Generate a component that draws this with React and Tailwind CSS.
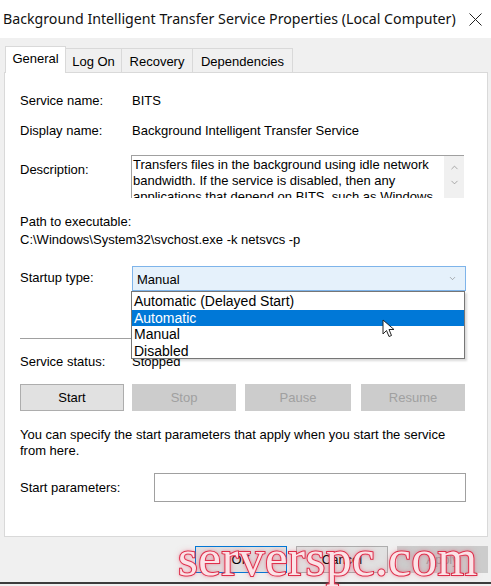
import React from 'react';
import { ChevronUp, ChevronDown } from 'lucide-react';

const tabs = [
    { name: 'General', w: 'w-[61px]', active: true },
    { name: 'Log On', w: 'w-[57px]' },
    { name: 'Recovery', w: 'w-[72px]' },
    { name: 'Dependencies', w: 'w-[101px]' },
];

const options = ['Automatic (Delayed Start)', 'Automatic', 'Manual', 'Disabled'];

const Row = ({ label, children, className = '' }) => (
    <div className={`flex leading-[16px] ${className}`}>
        <div className="w-[112px] shrink-0">{label}</div>
        <div>{children}</div>
    </div>
);

const Btn = ({ children, disabled, className = '' }) => (
    <div
        className={`h-[27px] flex items-center justify-center border ${disabled
            ? 'bg-[#cccccc] border-[#cccccc] text-[#a0a0a0]'
            : 'bg-[#e1e1e1] border-[#adadad] text-black'
            } ${className}`}
    >
        {children}
    </div>
);

export default function App() {
    return (
        <div className="w-[491px] h-[586px] bg-[#f0f0f0] relative overflow-hidden font-['Liberation_Sans',Arial,sans-serif] text-[13px] text-black">
            {/* title bar */}
            <div className="h-[38px] bg-white flex items-center justify-between pl-[3px] pr-[8px]">
                <span className="font-['Noto_Sans',sans-serif] text-[14.2px] text-[#111]">
                    Background Intelligent Transfer Service Properties (Local Computer)
                </span>
                <svg width="13" height="13" viewBox="0 0 13 13" className="mr-[1px]">
                    <path d="M0.5 0.5 L12.5 12.5 M12.5 0.5 L0.5 12.5" stroke="#222" strokeWidth="1" />
                </svg>
            </div>

            <div className="pl-[4px] pr-[3px] pt-[7px]">
                {/* tabs */}
                <div className="flex items-end h-[27px] pl-[1px]">
                    {tabs.map(t => (
                        <div
                            key={t.name}
                            className={`${t.w} flex items-center justify-center border border-b-0 border-[#d9d9d9] ${t.active
                                ? 'h-[27px] bg-white relative z-10 -mb-[1px] pb-[2px]'
                                : 'h-[24px] bg-[#f0f0f0] -ml-[1px] pt-[2px]'
                                }`}
                        >
                            {t.name}
                        </div>
                    ))}
                </div>

                {/* panel */}
                <div className="h-[465px] bg-white border border-[#d9d9d9] pl-[15px] pr-[20px] pt-[20px]">
                    <Row label="Service name:">BITS</Row>
                    <Row label="Display name:" className="mt-[14px]">Background Intelligent Transfer Service</Row>

                    <div className="flex mt-[16px]">
                        <div className="w-[111px] shrink-0 mt-[7px] leading-[16px]">Description:</div>
                        <div className="w-[333px] h-[43px] border-t border-l border-[#a0a0a0] flex overflow-hidden">
                            <div className="flex-1 pl-[1px] pt-[1px] leading-[16px] overflow-hidden">
                                Transfers files in the background using idle network bandwidth. If the service is disabled, then any applications that depend on BITS, such as Windows Update or MSN Explorer, will be unable to automatically download programs and other information.
                            </div>
                            <div className="w-[20px] bg-[#f0f0f0] flex flex-col items-center pt-[6px] gap-[4px] text-[#888]">
                                <ChevronUp size={11} strokeWidth={1.5} />
                                <ChevronDown size={11} strokeWidth={1.5} />
                            </div>
                        </div>
                    </div>

                    <div className="mt-[15px] leading-[18px]">
                        <div>Path to executable:</div>
                        <div>C:\Windows\System32\svchost.exe -k netsvcs -p</div>
                    </div>

                    <div className="flex mt-[17px]">
                        <div className="w-[112px] shrink-0 mt-[4px] leading-[16px]">Startup type:</div>
                        <div className="relative w-[334px]">
                            <div className="h-[25px] bg-[#e5f1fb] border border-[#7eb4ea] flex items-center justify-between pl-[4px] pr-[8px]">
                                <span className="mt-[2px]">Manual</span>
                                <ChevronDown size={9} strokeWidth={1.5} className="text-[#777]" />
                            </div>
                            <div className="absolute left-[-1px] top-[25px] w-[334px] h-[68px] bg-white border border-[#767676] z-20 pt-[1px] text-[14px] leading-[16.5px] shadow-[2px_2px_2px_rgba(0,0,0,0.15)]">
                                {options.map((o, i) => (
                                    <div
                                        key={o}
                                        className={`pl-[2px] ${i === 1 ? 'bg-[#0078d7] text-white' : 'text-black'}`}
                                    >
                                        {o}
                                    </div>
                                ))}
                                <svg width="14" height="20" viewBox="0 0 14 20" className="absolute left-[250px] top-[27px]">
                                    <path
                                        d="M1 1 L1 15 L4.5 11.5 L7 17.5 L9.5 16.5 L7 10.5 L12 10.5 Z"
                                        fill="white"
                                        stroke="#222"
                                        strokeWidth="1"
                                        strokeLinejoin="round"
                                    />
                                </svg>
                            </div>
                        </div>
                    </div>

                    <div className="h-[1px] bg-[#a0a0a0] mt-[47px] w-[111px]" />

                    <Row label="Service status:" className="mt-[15px]">Stopped</Row>

                    <div className="flex mt-[14px]">
                        <Btn className="w-[104px]">Start</Btn>
                        <Btn disabled className="w-[104px] ml-[8px]">Stop</Btn>
                        <Btn disabled className="w-[106px] ml-[9px]">Pause</Btn>
                        <Btn disabled className="w-[104px] ml-[10px]">Resume</Btn>
                    </div>

                    <div className="mt-[16px] leading-[16px]">
                        You can specify the start parameters that apply when you start the service
                        <br />
                        from here.
                    </div>

                    <div className="flex mt-[14px] items-center">
                        <div className="w-[134px] shrink-0">Start parameters:</div>
                        <div className="w-[312px] h-[29px] border border-[#a0a0a0] bg-white" />
                    </div>
                </div>
            </div>

            {/* dialog buttons */}
            <div className="flex pl-[195px] mt-[9px]">
                <div className="w-[92px] h-[27px] bg-[#e1e1e1] border border-[#0078d7] flex items-center justify-center">OK</div>
                <div className="w-[92px] h-[27px] bg-[#e1e1e1] border border-[#adadad] flex items-center justify-center ml-[9px]">Cancel</div>
                <div className="w-[91px] h-[27px] bg-[#cccccc] border border-[#cccccc] text-[#a0a0a0] flex items-center justify-center ml-[9px]">Apply</div>
            </div>
            <div className="h-[2px] bg-[#3c3c3c] mt-[9px]" />

            {/* watermark */}
            <div className="absolute left-[178px] top-[533px] z-30 font-['Liberation_Serif',serif] text-[51px] leading-none text-[#fbe3e7] [-webkit-text-stroke:2px_#d8243f] [paint-order:stroke_fill] [text-shadow:0_0_3px_rgba(235,70,100,0.9),0_0_6px_rgba(235,70,100,0.5)] tracking-[0.5px]">
                serverspc.com
            </div>
        </div>
    );
}
